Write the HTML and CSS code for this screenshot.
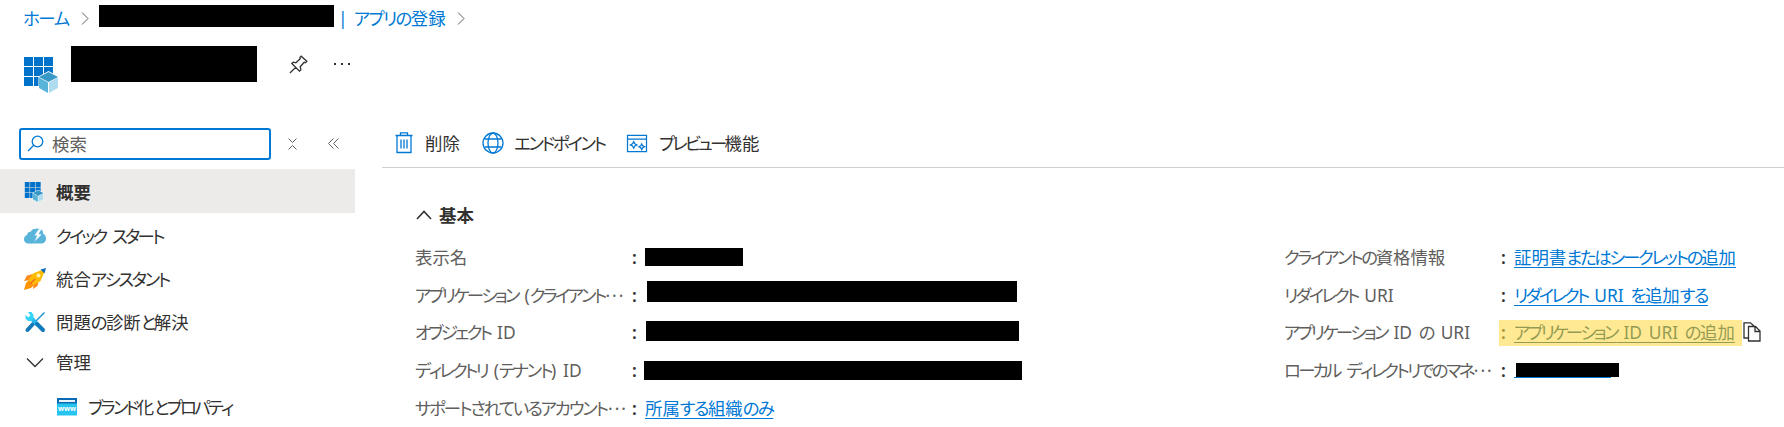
FILE: index.html
```html
<!DOCTYPE html>
<html lang="ja">
<head>
<meta charset="utf-8">
<title>アプリの登録</title>
<link rel="stylesheet" href="styles.css">
</head>
<body>
<svg width="0" height="0" class="defs">
  <symbol id="app" viewBox="0 0 34 36">
    <path fill="#0072c9" d="M0 0h9v9H0zM10 0h9v9h-9zM20 0h9v9h-9zM0 10h9v9H0zM10 10h9v9h-9zM20 10h9v9h-9zM0 20h9v9H0zM10 20h9v9h-9z"/>
    <path fill="#fff" d="M24.500 14L35 19.500V31l-10.500 6L14.500 31V19.500z"/>
    <path fill="#3999c6" d="M24.500 15l9.500 5-9.500 5-9.500-5z"/>
    <path fill="#59b4d9" d="M15 20.500l9 5V36l-9-5z"/>
    <path fill="#afdcef" d="M25 25.500l9-5V31l-9 5z"/>
  </symbol>
</svg>
<nav class="crumbs">
  <a class="home"><span class="h">ホーム</span></a>
  <svg class="sep" viewBox="0 0 8 13"><path d="M1 .5l6 6-6 6"/></svg>
  <span class="mask m-crumb"></span>
  <a class="reg"><span class="bar">|</span><span class="h">アプリの</span>登録</a>
  <svg class="sep" viewBox="0 0 8 13"><path d="M1 .5l6 6-6 6"/></svg>
</nav>
<header class="title">
  <svg class="title-icon"><use href="#app"/></svg>
  <span class="mask m-title"></span>
  <svg class="pin" viewBox="0 0 20 20"><path d="M1 19l6-6M3 9l8 8 1.500-1.500-.7-3.200 4.200-4.600 1.500.3 1.300-1.300L12.800 1.200 11.500 2.500l.3 1.500-4.600 4.200L4.500 7.500z"/></svg>
  <span class="dots"><i></i><i></i><i></i></span>
</header>
<div class="body">
  <aside class="side">
    <div class="tools">
      <div class="search">
        <svg viewBox="0 0 17 17"><circle cx="10.500" cy="6.500" r="5.300"/><path d="M6.500 10.500L1 16"/></svg>
        <span>検索</span>
      </div>
      <svg class="sort" viewBox="0 0 9 12"><path d="M.5.5l4 4 4-4M.5 11.500l4-4 4 4"/></svg>
      <svg class="fold" viewBox="0 0 11 11"><path d="M5.500.5l-5 5 5 5M10.500.5l-5 5 5 5"/></svg>
    </div>
    <ul class="menu">
      <li class="active"><svg class="ic ic-app" viewBox="0 0 34 36"><use href="#app"/></svg><span>概要</span></li>
      <li><svg class="ic" viewBox="0 0 22 22"><path fill="#59b4d9" d="M4.500 18.500C1.500 18.500 0 16.500 0 14.200c0-2 1.300-3.700 3.200-4.200 0-2.600 2-3.500 3.600-3.200.8-1.700 2.300-3 4.700-3L7.500 12h2.700L8 18.500z"/><path fill="#59b4d9" d="M9 18.500l8.500-9h-3.300l3-5.200c1.300.9 2.100 2.600 2 4.700 1.700.5 2.800 2.200 2.800 4.500 0 2.800-1.700 5-4.500 5z"/><path fill="#59b4d9" d="M7.500 6.500l5-3 3 .3-2 5.200 2 1-6 8.500H7z"/><path fill="#fff" d="M14.500 4.500L10.500 10.500h2.800L10.500 16l6.500-6.800h-2.800l3-5z"/></svg><span><span class="k2">クイック</span> <span class="k2">スタート</span></span></li>
      <li><svg class="ic" viewBox="0 0 22 22"><path fill="#ff8a1d" d="M9 6L3 7.500 0 13l6-1zM15 12l-1.500 6L9 21l.5-6z"/><path fill="#ff9300" d="M5 12l5 5-3 3-7 2 2-7z"/><path fill="#fb0" d="M19 1.500L9 5.500 4.500 12l5.500 5 6.500-4 4-9z"/><path fill="#0f6cbd" d="M22 0l-5.500 1.500 4 4z"/><circle cx="14.500" cy="7.500" r="2" fill="#fff1b0"/><path stroke="#f36d21" stroke-width="1.500" d="M6 16l5-5"/></svg><span>統合<span class="k">アシスタント</span></span></li>
      <li><svg class="ic" viewBox="0 0 22 22"><path fill="none" stroke="#1e91d0" stroke-width="1.500" d="M20.500 1.500L10 12"/><path stroke="#1578b8" stroke-width="4" stroke-linecap="round" d="M9 13l-5.500 6"/><path stroke="#27b5e8" stroke-width="4" stroke-linecap="round" d="M7 7l6 6"/><path stroke="#0f7bbd" stroke-width="4" stroke-linecap="round" d="M13 13l6 6"/><path fill="#32d4f5" d="M4 1l3.500 0L9.500 4v4L8 10H4L1.500 7.500V4L4.500 6.500l2-2z"/></svg><span>問題<span class="h">の</span>診断<span class="k">と</span>解決</span></li>
      <li class="group"><svg class="ic" viewBox="0 0 22 22"><path class="line" d="M3 7.500l8 8 8-8"/></svg><span>管理</span></li>
      <li class="sub"><svg class="ic" viewBox="0 0 22 22"><path fill="#27c4ef" d="M1 2h20v17.500H1z"/><path fill="#0a6ab6" d="M1 2h20v5.500H1z"/><path fill="#e8f4fb" d="M3 4h16v2H3z"/><text x="11" y="15">www</text></svg><span><span class="k2">ブランド</span>化<span class="k2">とプロパティ</span></span></li>
    </ul>
  </aside>
  <main class="main">
    <div class="bar-cmd">
      <span class="cmd c1"><svg viewBox="0 0 18 22"><path d="M.5 3.500h17M5.500 3V.800h7V3M2 3.500v17h14v-17M6 7.500v9M9 7.500v9M12 7.500v9"/></svg><span>削除</span></span>
      <span class="cmd c2"><svg viewBox="0 0 22 22"><circle cx="11" cy="11" r="10"/><ellipse cx="11" cy="11" rx="5" ry="10"/><path d="M2.500 7h17M2.500 15h17"/></svg><span class="k">エンドポイント</span></span>
      <span class="cmd c3"><svg viewBox="0 0 22 20"><path d="M1 1.500h20v17H1zM1 5.500h20M7.500 8l1.200 2.300L11 11.500l-2.300 1.200L7.500 15l-1.200-2.300L4 11.500l2.300-1.200zM16 10.500l1 2 2 1-2 1-1 2-1-2-2-1 2-1z"/></svg><span><span class="k2">プレビュー</span>機能</span></span>
    </div>
    <h2 class="basic"><svg viewBox="0 0 16 10"><path d="M1 9l7-7.500L15 9"/></svg>基本</h2>
    <div class="props">
      <dl class="col">
        <dt>表示名</dt><dd><span class="mask m1"></span></dd>
        <dt><span><span class="k2">アプリケーション</span> (<span class="k2">クライアント</span></span><b>···</b></dt><dd><span class="mask m2"></span></dd>
        <dt><span><span class="k2">オブジェクト</span> ID</span></dt><dd><span class="mask m3"></span></dd>
        <dt><span><span class="k2">ディレクトリ</span> (<span class="k">テナント</span>) ID</span></dt><dd><span class="mask m4"></span></dd>
        <dt><span class="h tight">サポートされているアカウント</span><b>···</b></dt><dd><a>所属<span class="h">する</span>組織<span class="h">のみ</span></a></dd>
      </dl>
      <dl class="col right">
        <dt><span><span class="k">クライアントの</span>資格情報</span></dt><dd><a>証明書<span class="k">またはシークレットの</span>追加</a></dd>
        <dt><span><span class="k2">リダイレクト</span> URI</span></dt><dd><a><span class="k2">リダイレクト</span> URI <span class="h">を</span>追加<span class="h">する</span></a></dd>
        <dt><span><span class="k2">アプリケーション</span> ID <span class="h">の</span> URI</span></dt><dd class="hl"><a><span class="k2">アプリケーション</span> ID URI <span class="h">の</span>追加</a><svg class="copy" viewBox="0 0 18 20"><path d="M5.500 16H1V.8h6.500L11 4M5.500 4.500h7L17 9v10H5.500zM12 4.500V9.500h5"/></svg></dd>
        <dt><span><span class="k2">ローカル</span> <span class="k2">ディレクトリでのマネ</span></span><b>···</b></dt><dd><span class="under"><span class="mask m5"></span></span></dd>
      </dl>
    </div>
  </main>
</div>
</body>
</html>
```
FILE: styles.css
```css
* { box-sizing: border-box; }
body {
  margin: 0; width: 1784px; height: 427px; overflow: hidden; background: #fff; color: #323130;
  font: 400 17.4px/24px "Noto Sans", "Noto Sans CJK JP", sans-serif;
  font-kerning: none; white-space: nowrap; word-spacing: 2.2px;
}
a { color: #0078d4; }
svg { display: block; flex: none; fill: none; overflow: visible; }
.defs { position: absolute; }
.h, .k, .k2 { font-feature-settings: "palt"; letter-spacing: -1.6px; }
.k { letter-spacing: -2.3px; }
.k2 { letter-spacing: -2.7px; }
.tight { letter-spacing: -2.1px; }
.mask { display: block; flex: none; background: #000; }

.crumbs { display: flex; align-items: center; height: 36px; padding-left: 23px; }
.home { width: 58px; }
.sep { width: 8px; height: 13px; stroke: #605e5c; }
.m-crumb { width: 235px; height: 22px; margin: -4px 4px 0 10px; }
.reg { display: flex; width: 119px; }
.bar { width: 16px; }

.title { display: flex; align-items: flex-start; height: 91px; padding: 10px 0 0 24px; }
.title-icon { width: 34px; height: 36px; margin-top: 11px; }
.m-title { width: 186px; height: 36px; margin-left: 13px; }
.pin { width: 19px; height: 19px; margin: 9px 0 0 32px; stroke: #323130; stroke-width: 1.4; }
.dots { display: flex; gap: 5px; margin: 17px 0 0 26px; }
.dots i { width: 2px; height: 2px; background: #323130; }

.body { display: flex; }
.side { flex: none; width: 355px; }
.tools { display: flex; align-items: center; height: 42px; padding: 0 0 9px 19px; }
.search { display: flex; align-items: center; width: 252px; height: 32px; padding-left: 6px; border: 2px solid #0078d4; border-radius: 3px; color: #605e5c; }
.search svg { width: 17px; height: 17px; margin-right: 8px; stroke: #0078d4; stroke-width: 1.3; }
.sort { width: 9px; height: 12px; margin-left: 17px; stroke: #605e5c; }
.fold { width: 11px; height: 11px; margin-left: 31px; stroke: #605e5c; }
.menu { list-style: none; margin: 0; padding: 0; }
.menu li { display: flex; align-items: center; height: 43px; padding: 2px 0 0 24px; }
.menu .active { height: 44px; background: #edebe9; font-weight: 700; }
.menu .group { height: 40px; padding-top: 0; }
.menu .sub { height: 50px; padding: 0 0 0 56px; }
.ic { width: 22px; height: 22px; margin-right: 10px; }
.ic-app { width: 20px; height: 20px; margin-right: 12px; }
.line { stroke: #323130; stroke-width: 1.3; }
.ic text { fill: #fff; font: 700 7px "Noto Sans", sans-serif; text-anchor: middle; }

.main { flex: 1; margin-left: 27px; }
.bar-cmd { display: flex; align-items: center; height: 41px; padding: 0 0 8px 13px; border-bottom: 1px solid #d2d0ce; }
.cmd { display: flex; align-items: center; }
.cmd svg { stroke: #0078d4; stroke-width: 1.3; }
.c1 { width: 87px; } .c1 svg { width: 18px; height: 22px; margin-right: 12px; }
.c2 { width: 144px; } .c2 svg { width: 22px; height: 22px; margin-right: 10px; }
.c3 svg { width: 22px; height: 19px; margin-right: 11px; }
.basic { display: flex; align-items: center; height: 24px; margin: 35px 0 12px 34px; font-size: 17.4px; font-weight: 700; }
.basic svg { width: 16px; height: 10px; margin-right: 7px; stroke: #323130; stroke-width: 1.6; }
.props { display: flex; padding-left: 33px; }
.col { display: grid; grid-template-columns: 217px 652px; grid-auto-rows: 37.75px; margin: -1px 0 0; }
.right { grid-template-columns: 217px 270px; }
.col dt { display: flex; align-items: center; color: #605e5c; }
.col b { font-weight: 400; letter-spacing: 2px; margin-left: 1px; }
.col dd { display: flex; align-items: center; margin: 0; }
.col dd::before { content: ":"; width: 12px; margin-right: 1px; font-weight: 600; }
.col dd a { text-decoration: underline; text-underline-offset: 3px; text-decoration-thickness: 1px; }
.m1 { width: 98px; height: 18px; }
.m2 { width: 370px; height: 21px; margin: -7px 0 0 2px; }
.m3 { width: 373px; height: 20px; margin: -2px 0 0 1px; }
.m4 { width: 378px; height: 19px; margin-left: -1px; }
.m5 { width: 103px; height: 14px; margin-left: 2px; }
.under { padding-bottom: 1px; background: linear-gradient(#0078d4, #0078d4) 0 100% / 97px 1px no-repeat; }
.hl { position: relative; }
.col .hl a { color: #004a70; }
.hl::after { content: ""; position: absolute; left: -2px; top: 6px; width: 243px; height: 26px; background: rgba(255, 217, 64, .57); }
.copy { width: 18px; height: 20px; margin-left: 8px; stroke: #323130; stroke-width: 1.3; }
```
